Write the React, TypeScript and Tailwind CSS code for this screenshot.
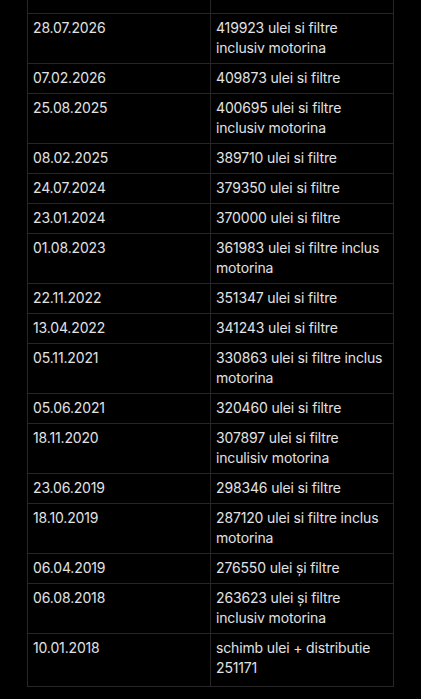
import React from "react";

const rows: [string, string][] = [
  ["28.07.2026", "419923 ulei si filtre inclusiv motorina"],
  ["07.02.2026", "409873 ulei si filtre"],
  ["25.08.2025", "400695 ulei si filtre inclusiv motorina"],
  ["08.02.2025", "389710 ulei si filtre"],
  ["24.07.2024", "379350 ulei si filtre"],
  ["23.01.2024", "370000 ulei si filtre"],
  ["01.08.2023", "361983 ulei si filtre inclus motorina"],
  ["22.11.2022", "351347 ulei si filtre"],
  ["13.04.2022", "341243 ulei si filtre"],
  ["05.11.2021", "330863 ulei si filtre inclus motorina"],
  ["05.06.2021", "320460 ulei si filtre"],
  ["18.11.2020", "307897 ulei si filtre inculisiv motorina"],
  ["23.06.2019", "298346 ulei si filtre"],
  ["18.10.2019", "287120 ulei si filtre inclus motorina"],
  ["06.04.2019", "276550 ulei și filtre"],
  ["06.08.2018", "263623 ulei și filtre inclusiv motorina"],
  ["10.01.2018", "schimb ulei + distributie 251171"],
];

export default function App() {
  return (
    <div
      className="min-h-[699px] w-[421px] bg-black text-[#e2e2e2] overflow-hidden"
      style={{ fontFamily: "Inter, 'Noto Sans', sans-serif" }}
    >
      <div className="pl-[27px] w-[394px]">
        <table className="w-[367px] table-fixed border-collapse text-[14px] leading-[20px] tracking-[-0.15px]">
          <tbody>
            <tr className="h-[13px]">
              <td className="w-[183px] border-x border-b border-[#262626]"></td>
              <td className="border-x border-b border-[#262626]"></td>
            </tr>
            {rows.map(([d, t], i) => {
              const last = i === rows.length - 1;
              const cls = last
                ? "align-top border border-[#262626] px-[5px] pt-[4px] pb-[8px]"
                : "align-top border border-[#262626] px-[5px] pt-[4px] pb-[5px]";
              return (
                <tr key={d}>
                  <td className={cls}>{d}</td>
                  <td className={cls}>{t}</td>
                </tr>
              );
            })}
          </tbody>
        </table>
      </div>
    </div>
  );
}
